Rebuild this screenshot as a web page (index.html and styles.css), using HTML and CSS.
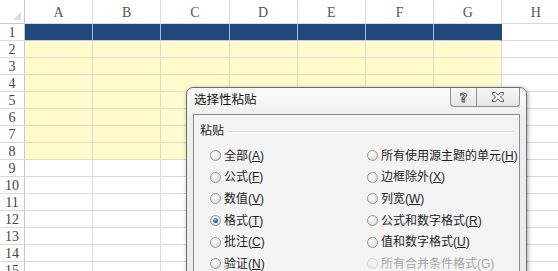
FILE: index.html
```html
<!DOCTYPE html>
<html lang="zh">
<head>
<meta charset="utf-8">
<link rel="stylesheet" href="styles.css">
</head>
<body>
<div class="sheet">
  <div class="ch corner"><span class="tri"></span></div><div class="ch">A</div><div class="ch">B</div><div class="ch">C</div><div class="ch">D</div><div class="ch">E</div><div class="ch">F</div><div class="ch">G</div><div class="ch">H</div>
  <div class="rh">1</div><div class="n"></div><div class="n"></div><div class="n"></div><div class="n"></div><div class="n"></div><div class="n"></div><div class="n last"></div><div class="c"></div>
  <div class="rh">2</div><div class="y"></div><div class="y"></div><div class="y"></div><div class="y"></div><div class="y"></div><div class="y"></div><div class="y"></div><div class="c"></div>
  <div class="rh">3</div><div class="y"></div><div class="y"></div><div class="y"></div><div class="y"></div><div class="y"></div><div class="y"></div><div class="y"></div><div class="c"></div>
  <div class="rh">4</div><div class="y"></div><div class="y"></div><div class="y"></div><div class="y"></div><div class="y"></div><div class="y"></div><div class="y"></div><div class="c"></div>
  <div class="rh">5</div><div class="y"></div><div class="y"></div><div class="y"></div><div class="y"></div><div class="y"></div><div class="y"></div><div class="y"></div><div class="c"></div>
  <div class="rh">6</div><div class="y"></div><div class="y"></div><div class="y"></div><div class="y"></div><div class="y"></div><div class="y"></div><div class="y"></div><div class="c"></div>
  <div class="rh">7</div><div class="y"></div><div class="y"></div><div class="y"></div><div class="y"></div><div class="y"></div><div class="y"></div><div class="y"></div><div class="c"></div>
  <div class="rh">8</div><div class="y"></div><div class="y"></div><div class="y"></div><div class="y"></div><div class="y"></div><div class="y"></div><div class="y"></div><div class="c"></div>
  <div class="rh">9</div><div class="c"></div><div class="c"></div><div class="c"></div><div class="c"></div><div class="c"></div><div class="c"></div><div class="c"></div><div class="c"></div>
  <div class="rh">10</div><div class="c"></div><div class="c"></div><div class="c"></div><div class="c"></div><div class="c"></div><div class="c"></div><div class="c"></div><div class="c"></div>
  <div class="rh">11</div><div class="c"></div><div class="c"></div><div class="c"></div><div class="c"></div><div class="c"></div><div class="c"></div><div class="c"></div><div class="c"></div>
  <div class="rh">12</div><div class="c"></div><div class="c"></div><div class="c"></div><div class="c"></div><div class="c"></div><div class="c"></div><div class="c"></div><div class="c"></div>
  <div class="rh">13</div><div class="c"></div><div class="c"></div><div class="c"></div><div class="c"></div><div class="c"></div><div class="c"></div><div class="c"></div><div class="c"></div>
  <div class="rh">14</div><div class="c"></div><div class="c"></div><div class="c"></div><div class="c"></div><div class="c"></div><div class="c"></div><div class="c"></div><div class="c"></div>
  <div class="rh">15</div><div class="c"></div><div class="c"></div><div class="c"></div><div class="c"></div><div class="c"></div><div class="c"></div><div class="c"></div><div class="c"></div>
</div>

<div class="dialog">
  <div class="titlebar">
    <span class="title">选择性粘贴</span>
    <div class="tbtns">
      <span class="tbtn help">?</span>
      <span class="tbtn close">
        <svg width="14" height="12" viewBox="0 0 14 12"><path d="M1.5 1.5h3l2.5 2.5 2.5-2.5h3v1.5l-3 3 3 3v1.5h-3l-2.5-2.5-2.5 2.5h-3v-1.5l3-3-3-3z" fill="#fff" stroke="#555" stroke-width="1"/></svg>
      </span>
    </div>
  </div>
  <div class="client">
    <div class="group">
      <span class="glabel">粘贴</span><span class="gline"></span>
    </div>
    <div class="opts">
      <label class="opt"><span class="radio"></span><span>全部(<u>A</u>)</span></label>
      <label class="opt"><span class="radio"></span><span>所有使用源主题的单元(<u>H</u>)</span></label>
      <label class="opt"><span class="radio"></span><span>公式(<u>F</u>)</span></label>
      <label class="opt"><span class="radio"></span><span>边框除外(<u>X</u>)</span></label>
      <label class="opt"><span class="radio"></span><span>数值(<u>V</u>)</span></label>
      <label class="opt"><span class="radio"></span><span>列宽(<u>W</u>)</span></label>
      <label class="opt"><span class="radio on"></span><span>格式(<u>T</u>)</span></label>
      <label class="opt"><span class="radio"></span><span>公式和数字格式(<u>R</u>)</span></label>
      <label class="opt"><span class="radio"></span><span>批注(<u>C</u>)</span></label>
      <label class="opt"><span class="radio"></span><span>值和数字格式(<u>U</u>)</span></label>
      <label class="opt"><span class="radio"></span><span>验证(<u>N</u>)</span></label>
      <label class="opt dis"><span class="radio"></span><span>所有合并条件格式(G)</span></label>
    </div>
  </div>
</div>
</body>
</html>
```

FILE: styles.css
```css
html, body {
  margin: 0;
  padding: 0;
  background: #fff;
  overflow: hidden;
  width: 558px;
  height: 271px;
}

.sheet {
  display: grid;
  grid-template-columns: 25px repeat(8, 68.2px);
  grid-template-rows: 24px;
  grid-auto-rows: 17px;
  font-family: "Liberation Serif", "DejaVu Serif", serif;
}

.sheet > div {
  box-sizing: border-box;
  border-right: 1px solid #dadada;
  border-bottom: 1px solid #dadada;
}

.ch {
  display: flex;
  align-items: flex-end;
  justify-content: center;
  padding-bottom: 2px;
  font-size: 14px;
  color: #555;
  background: #fff;
}

.corner {
  position: relative;
  border-right-color: #c8c8c8 !important;
  border-bottom-color: #c8c8c8 !important;
}

.tri {
  position: absolute;
  right: 3px;
  bottom: 3px;
  width: 0;
  height: 0;
  border-left: 8px solid transparent;
  border-bottom: 8px solid #dcdcdc;
}

.rh {
  display: flex;
  align-items: center;
  justify-content: center;
  font-size: 14px;
  line-height: 17px;
  color: #444;
  border-right-color: #c8c8c8 !important;
}

.n {
  background: #1f487c;
  border-right-color: #a9c0dc !important;
  border-bottom-color: #c8c8c8 !important;
}

.n.last {
  border-right-color: #1f487c !important;
}

.y {
  background: #fffbcc;
  border-right-color: #e0dcc0 !important;
  border-bottom-color: #dedbc6 !important;
}

.c {
  background: #fff;
}

/* dialog */
.dialog {
  position: absolute;
  left: 186px;
  top: 87px;
  width: 341px;
  height: 200px;
  box-sizing: border-box;
  border: 1px solid #6d6d6d;
  border-radius: 7px 7px 0 0;
  background: linear-gradient(180deg, #fbfbfb 0%, #efefef 30px, #ececec 100%);
  box-shadow: 1px 1px 4px rgba(0, 0, 0, 0.35);
  font-family: "Liberation Sans", "Noto Sans CJK SC", sans-serif;
  font-size: 12px;
  color: #1e1e1e;
}

.titlebar {
  height: 26px;
  display: flex;
  justify-content: space-between;
  align-items: flex-start;
}

.title {
  margin: 5px 0 0 7px;
  font-size: 12.5px;
  line-height: 15px;
  color: #111;
}

.tbtns {
  display: flex;
  margin-right: 6px;
  margin-top: 0;
}

.tbtn {
  box-sizing: border-box;
  height: 19px;
  display: flex;
  align-items: center;
  justify-content: center;
  border: 1px solid #8f8f8f;
  border-top: none;
  background: linear-gradient(180deg, #f8f8f8, #e6e6e6);
}

.help {
  width: 27px;
  border-radius: 0 0 0 4px;
  font-family: "DejaVu Sans", sans-serif;
  font-weight: bold;
  font-size: 13px;
  color: #fff;
  -webkit-text-stroke: 1px #555;
}

.close {
  width: 43px;
  border-left: none;
  border-radius: 0 0 4px 0;
}

.client {
  margin: 0 6px;
  height: 200px;
  border: 1px solid #8c8c8c;
  background: #f4f4f4;
  padding: 9px 6px 0 6px;
}

.group {
  display: flex;
  align-items: center;
  gap: 4px;
}

.glabel {
  line-height: 14px;
}

.gline {
  flex: 1;
  height: 0;
  border-top: 1px solid #d5d5d5;
  border-bottom: 1px solid #fff;
  margin-top: 1px;
}

.opts {
  display: grid;
  grid-template-columns: 157px 1fr;
  grid-auto-rows: 21.6px;
  margin: 7px 0 0 10px;
}

.opt {
  display: flex;
  align-items: center;
  gap: 3px;
  white-space: nowrap;
  line-height: 14px;
}

.opt u {
  text-underline-offset: 1px;
}

.radio {
  box-sizing: border-box;
  width: 11px;
  height: 11px;
  border-radius: 50%;
  border: 1px solid #9a9a9a;
  background: radial-gradient(circle at 40% 35%, #ffffff 0%, #eaeaea 50%, #cfcfcf 100%);
  position: relative;
  flex: none;
}

.radio.on::after {
  content: "";
  position: absolute;
  left: 2px;
  top: 2px;
  width: 5px;
  height: 5px;
  border-radius: 50%;
  background: radial-gradient(circle at 40% 35%, #9cc4ee 0%, #2c66b0 55%, #163f75 100%);
}

.opt.dis {
  color: #a6a6a6;
}

.opt.dis .radio {
  border-color: #d0d0d0;
  background: #f0f0f0;
}
```
